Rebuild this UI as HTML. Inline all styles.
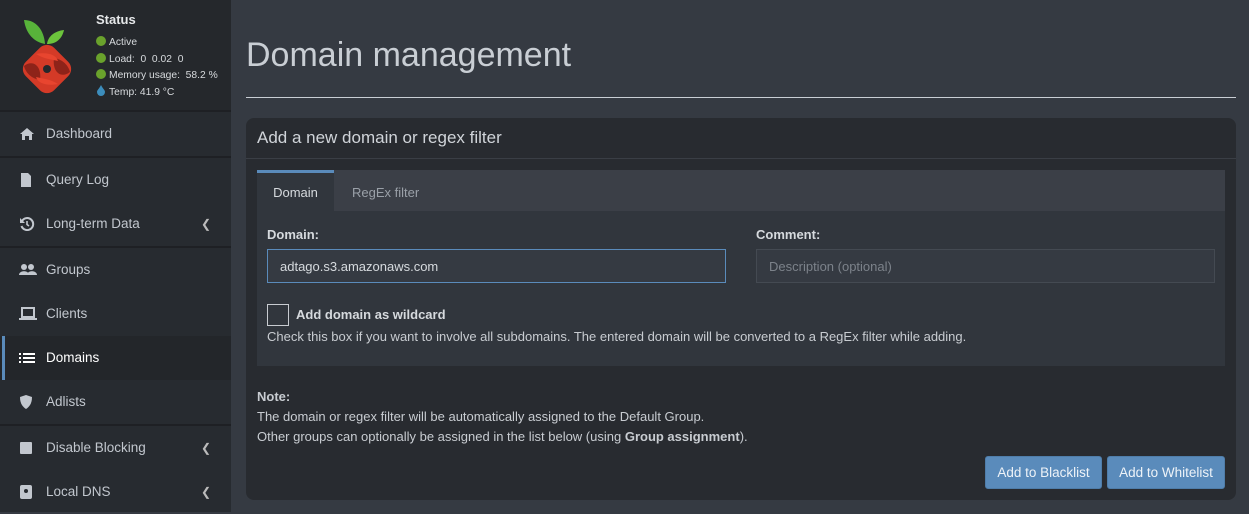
<!DOCTYPE html>
<html><head><meta charset="utf-8"><style>
*{box-sizing:border-box;margin:0;padding:0}
body{width:1249px;height:512px;overflow:hidden;background:#353a42;font-family:"Source Sans Pro","Liberation Sans",sans-serif;color:#c8ccd1;position:relative;font-size:13px}
.sb{position:absolute;left:0;top:0;width:231px;height:512px;background:#272b30}
.hdr{position:absolute;left:0;top:0;width:231px;height:110px;background:#25282c}
.item{position:absolute;left:0;width:231px;height:44px;line-height:44px;padding-left:46px;font-size:13.5px;color:#c2c7ce}
.item svg{position:absolute;left:19px;top:15px}
.chev{position:absolute;right:20px;top:0;font-size:12px;color:#bbb}
.sep{position:absolute;left:0;width:231px;height:2px;background:#1e2024}
.abs{position:absolute}
.card{position:absolute;left:246px;top:118px;width:990px;height:382px;background:#282b30;border-radius:8px}
.btn{position:absolute;top:456px;height:33px;background:#5a8bbb;border:1px solid #4f7da9;border-radius:3px;color:#eef3f8;font-size:13.5px;line-height:31px;text-align:center}
</style></head><body>
<div class="sb">
<div class="hdr">
<svg class="abs" style="left:18px;top:14px" width="60" height="84" viewBox="0 0 60 84">
<path d="M6 6 C18 6 26 16 27 30 C16 28 8 20 6 6Z" fill="#58b33a"/>
<path d="M29 30 C30 22 37 17 46 16 C44 25 38 30 29 30Z" fill="#6cc43c"/>
<rect x="9" y="35" width="40" height="40" rx="10" transform="rotate(45 29 55)" fill="#d43a27"/>
<path d="M6 52 C15 45 24 52 22 66 C15 65 8 60 6 52Z" fill="#8e2319"/>
<path d="M52 58 C43 65 34 58 36 44 C43 45 50 50 52 58Z" fill="#8e2319"/>
<path d="M18 40 C28 38 38 40 40 47 C32 45 26 45 18 40Z" fill="#e8452f"/>
<path d="M40 70 C30 72 20 70 18 63 C26 65 32 65 40 70Z" fill="#e8452f"/>
<circle cx="29" cy="55" r="4" fill="#25282c"/>
</svg>
<div class="abs" style="left:96px;top:12px;font-weight:bold;font-size:13px;color:#e6e8ea">Status</div>
<div class="abs" style="left:96px;top:35px;font-size:10.3px;line-height:16.5px;color:#d8dbde">
<div><span style="display:inline-block;width:10px;height:10px;border-radius:50%;background:#6aa22c;margin-right:3px;vertical-align:-1px"></span>Active</div>
<div><span style="display:inline-block;width:10px;height:10px;border-radius:50%;background:#6aa22c;margin-right:3px;vertical-align:-1px"></span>Load:&nbsp; 0&nbsp; 0.02&nbsp; 0</div>
<div><span style="display:inline-block;width:10px;height:10px;border-radius:50%;background:#6aa22c;margin-right:3px;vertical-align:-1px"></span>Memory usage:&nbsp; 58.2 %</div>
<div><svg width="10" height="11" viewBox="0 0 10 11" style="margin-right:3px;vertical-align:-1px"><path d="M5 0 C7 4 9 5 9 7 A4 4 0 0 1 1 7 C1 5 3 4 5 0Z" fill="#3c8dbc"/></svg>Temp: 41.9 °C</div>
</div>
</div>
<div class="sep" style="top:110px"></div>
<div class="item" style="top:112px"><svg width="16" height="14" viewBox="0 0 16 14"><path d="M8 1 L15 7 L13 7 L13 13 L10 13 L10 9 L6 9 L6 13 L3 13 L3 7 L1 7Z" fill="#c2c7ce"/></svg>Dashboard</div>
<div class="sep" style="top:156px"></div>
<div class="item" style="top:158px"><svg width="14" height="14" viewBox="0 0 14 14"><path d="M2 0 H9 L12 3 V14 H2Z" fill="#c2c7ce"/></svg>Query Log</div>
<div class="item" style="top:202px"><svg width="16" height="14" viewBox="0 0 16 14"><path d="M3 4 A6 6 0 1 1 2.5 9" fill="none" stroke="#c2c7ce" stroke-width="2"/><path d="M1 1 L1 6 L6 6Z" fill="#c2c7ce"/><path d="M8 4 V7.5 L10 9" stroke="#c2c7ce" stroke-width="1.6" fill="none"/></svg>Long-term Data<span class="chev">&#10094;</span></div>
<div class="sep" style="top:246px"></div>
<div class="item" style="top:248px"><svg width="18" height="14" viewBox="0 0 18 14"><circle cx="5" cy="4" r="3" fill="#c2c7ce"/><circle cx="12" cy="4" r="3" fill="#c2c7ce"/><path d="M0 12 C0 7 10 7 10 12Z M8 12 C8 7 18 7 18 12Z" fill="#c2c7ce"/></svg>Groups</div>
<div class="item" style="top:292px"><svg width="18" height="14" viewBox="0 0 18 14"><rect x="3" y="1" width="12" height="9" fill="none" stroke="#c2c7ce" stroke-width="2"/><rect x="0" y="11" width="18" height="2" fill="#c2c7ce"/></svg>Clients</div>
<div class="item" style="top:336px;background:#23262a;color:#fff"><div class="abs" style="left:2px;top:0;width:3px;height:44px;background:#5a8bbb"></div><svg width="16" height="14" viewBox="0 0 16 14"><path d="M0 2h2v2H0zM4 2h12v2H4zM0 6h2v2H0zM4 6h12v2H4zM0 10h2v2H0zM4 10h12v2H4z" fill="#fff"/></svg>Domains</div>
<div class="item" style="top:380px"><svg width="14" height="14" viewBox="0 0 14 14"><path d="M7 0 L13 2 C13 9 10 12 7 14 C4 12 1 9 1 2Z" fill="#c2c7ce"/></svg>Adlists</div>
<div class="sep" style="top:424px"></div>
<div class="item" style="top:426px"><svg width="14" height="14" viewBox="0 0 14 14"><rect x="1" y="1" width="12" height="12" rx="1" fill="#c2c7ce"/></svg>Disable Blocking<span class="chev">&#10094;</span></div>
<div class="item" style="top:470px"><svg width="14" height="14" viewBox="0 0 14 14"><rect x="1" y="0" width="12" height="14" rx="2" fill="#c2c7ce"/><circle cx="7" cy="6" r="2" fill="#272b30"/></svg>Local DNS<span class="chev">&#10094;</span></div>
</div>
<div class="abs" style="left:246px;top:36px;font-size:34px;color:#c9ced4;font-weight:300">Domain management</div>
<div class="abs" style="left:246px;top:97px;width:990px;height:1px;background:#c9ced4"></div>
<div class="card">
<div class="abs" style="left:11px;top:10px;font-size:17px;color:#d0d4d9">Add a new domain or regex filter</div>
<div class="abs" style="left:0;top:40px;width:990px;height:1px;background:#3a3e45"></div>
<div class="abs" style="left:11px;top:52px;width:968px;height:196px;background:#31363d">
<div class="abs" style="left:0;top:0;width:968px;height:41px;background:#3b3f47"></div>
<div class="abs" style="left:0;top:0;width:77px;height:41px;background:#31363d;border-top:3px solid #5a8bbb;text-align:center;line-height:40px;color:#d6dade">Domain</div>
<div class="abs" style="left:95px;top:0;line-height:46px;color:#9aa0a8">RegEx filter</div>
<div class="abs" style="left:10px;top:57px;font-weight:bold;color:#d6dade">Domain:</div>
<div class="abs" style="left:10px;top:79px;width:459px;height:34px;border:1px solid #5a8bbb;background:#353a42;padding-left:12px;line-height:33px;color:#d6dade">adtago.s3.amazonaws.com</div>
<div class="abs" style="left:499px;top:57px;font-weight:bold;color:#d6dade">Comment:</div>
<div class="abs" style="left:499px;top:79px;width:459px;height:34px;border:1px solid #444a52;background:#353a42;padding-left:12px;line-height:33px;color:#7c828a">Description (optional)</div>
<div class="abs" style="left:10px;top:134px;width:22px;height:22px;border:1px solid #c8ccd1"></div>
<div class="abs" style="left:39px;top:137px;font-weight:bold;color:#d6dade">Add domain as wildcard</div>
<div class="abs" style="left:10px;top:159px;color:#c8ccd1">Check this box if you want to involve all subdomains. The entered domain will be converted to a RegEx filter while adding.</div>
</div>
<div class="abs" style="left:11px;top:269px;line-height:20px;color:#c8ccd1"><b>Note:</b><br>The domain or regex filter will be automatically assigned to the Default Group.<br>Other groups can optionally be assigned in the list below (using <b>Group assignment</b>).</div>
</div>
<div class="btn" style="left:985px;width:117px">Add to Blacklist</div>
<div class="btn" style="left:1107px;width:118px">Add to Whitelist</div>
</body></html>
